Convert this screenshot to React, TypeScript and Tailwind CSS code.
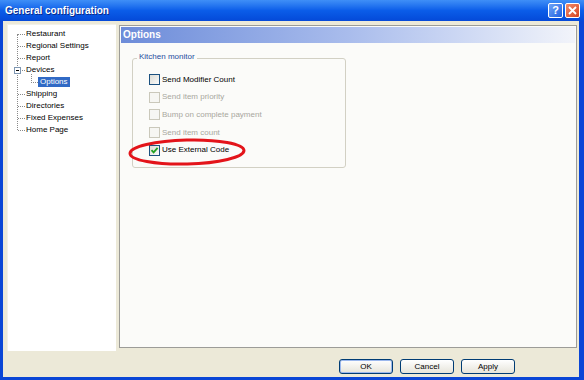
import React from "react";

const treeItems = [
    { label: "Restaurant", level: 0 },
    { label: "Regional Settings", level: 0 },
    { label: "Report", level: 0 },
    { label: "Devices", level: 0, expanded: true },
    { label: "Options", level: 1, selected: true },
    { label: "Shipping", level: 0 },
    { label: "Directories", level: 0 },
    { label: "Fixed Expenses", level: 0 },
    { label: "Home Page", level: 0 },
];

const options = [
    { label: "Send Modifier Count", enabled: true, checked: false },
    { label: "Send item priority", enabled: false, checked: false },
    { label: "Bump on complete payment", enabled: false, checked: false },
    { label: "Send item count", enabled: false, checked: false },
    { label: "Use External Code", enabled: true, checked: true },
];

function CheckBox({ enabled, checked }: { enabled: boolean; checked: boolean }) {
    return (
        <div
            className={
                enabled
                    ? "w-[11px] h-[11px] border border-[#1c5180] bg-gradient-to-br from-[#dcdcd6] to-[#fbfbfa] flex items-center justify-center"
                    : "w-[11px] h-[11px] border border-[#cac8bb] bg-[#f6f6f3]"
            }
        >
            {checked && (
                <svg width="9" height="9" viewBox="0 0 9 9">
                    <path d="M1.5 4.2 L3.6 6.4 L7.6 1.8" fill="none" stroke="#21a121" strokeWidth="1.8" />
                </svg>
            )}
        </div>
    );
}

function XpButton({ label, def }: { label: string; def?: boolean }) {
    return (
        <button
            className={
                "w-[54px] h-[15px] rounded-[3px] border border-[#003c74] bg-gradient-to-b from-white to-[#e6e4da] text-[8px] text-black leading-none flex items-center justify-center " +
                (def ? "shadow-[inset_0_0_0_1px_#9cb8ed]" : "")
            }
        >
            {label}
        </button>
    );
}

export default function App() {
    return (
        <div
            className="relative w-[584px] h-[380px] bg-[#0a46d6] flex flex-col overflow-hidden"
            style={{ fontFamily: '"Liberation Sans", Arial, sans-serif' }}
        >
            {/* Title bar */}
            <div className="h-[21px] flex items-center bg-gradient-to-b from-[#3f8ff7] via-[#0b5de9] to-[#0549d8] pl-[5px] pr-[4px]">
                <span className="text-white font-bold text-[10px] [text-shadow:1px_1px_0_#0a2a8a]">
                    General configuration
                </span>
                <div className="ml-auto flex gap-[2px]">
                    <div className="w-[15px] h-[15px] rounded-[2px] border border-white bg-gradient-to-br from-[#6fa3f7] to-[#1e5fe0] flex items-center justify-center text-white font-bold text-[11px] leading-none">
                        ?
                    </div>
                    <div className="w-[15px] h-[15px] rounded-[2px] border border-white bg-gradient-to-br from-[#f08a6a] to-[#d4421c] flex items-center justify-center">
                        <svg width="9" height="9" viewBox="0 0 9 9">
                            <path d="M1 1 L8 8 M8 1 L1 8" stroke="white" strokeWidth="1.8" />
                        </svg>
                    </div>
                </div>
            </div>

            {/* Client area */}
            <div className="flex-1 ml-[3px] mr-[5px] mb-[3px] bg-[#ece9d8] flex flex-col">
                <div className="flex pt-[3px]">
                    {/* Tree */}
                    <div className="ml-[4px] w-[109px] h-[327px] bg-white border-l border-t border-[#f2f1ea] relative text-[8px] text-black">
                        <div className="absolute left-[9px] top-[9px] w-0 h-[96px] border-l border-dotted border-[#8a8a8a]" />
                        <div className="absolute left-[23px] top-[49px] w-0 h-[9px] border-l border-dotted border-[#8a8a8a]" />
                        <div className="pt-[3px] flex flex-col">
                            {treeItems.map((it) => (
                                <div key={it.label} className="h-[12px] flex items-center relative">
                                    {it.level === 0 ? (
                                        <>
                                            <div className="w-[10px]" />
                                            <div className="w-[7px] border-t border-dotted border-[#8a8a8a]" />
                                            {it.expanded && (
                                                <div className="absolute left-[6px] top-[3px] w-[7px] h-[7px] border border-[#7f97b2] bg-white flex items-center justify-center">
                                                    <div className="w-[3px] h-px bg-black" />
                                                </div>
                                            )}
                                            <span className="ml-[1px] leading-none">{it.label}</span>
                                        </>
                                    ) : (
                                        <>
                                            <div className="w-[23px]" />
                                            <div className="w-[7px] border-t border-dotted border-[#8a8a8a]" />
                                            <span className="bg-[#316ac5] text-white px-[2px] h-[10px] flex items-center leading-none">
                                                {it.label}
                                            </span>
                                        </>
                                    )}
                                </div>
                            ))}
                        </div>
                    </div>

                    {/* Right panel */}
                    <div className="ml-[3px] mt-[1px] w-[458px] h-[323px] border border-[#9c9c98] bg-[#fbfbf9] flex flex-col">
                        <div className="h-[16px] m-[1px] bg-gradient-to-r from-[#6d8cd9] via-[#a9bcec] to-[#f2f4fa] flex items-center pl-[2px]">
                            <span className="text-white font-bold text-[10px] leading-none">Options</span>
                        </div>

                        <div className="ml-[12px] mt-[14px] w-[214px] h-[110px] border border-[#d2d0c4] rounded-[3px] relative">
                            <span className="absolute left-[4px] top-[-6px] bg-[#fbfbf9] px-[2px] text-[8px] text-[#1f4d9e] leading-none">
                                Kitchen monitor
                            </span>
                            <div className="pt-[12px] pl-[16px] flex flex-col">
                                {options.map((o) => (
                                    <div key={o.label} className="h-[17.6px] flex items-center gap-[2px]">
                                        <CheckBox enabled={o.enabled} checked={o.checked} />
                                        <span
                                            className={
                                                "text-[8px] leading-none " + (o.enabled ? "text-black" : "text-[#a8a79e]")
                                            }
                                        >
                                            {o.label}
                                        </span>
                                    </div>
                                ))}
                            </div>
                        </div>
                    </div>
                </div>

                {/* Buttons */}
                <div className="mt-[8px] flex gap-[7px] pl-[336px]">
                    <XpButton label="OK" def />
                    <XpButton label="Cancel" />
                    <XpButton label="Apply" />
                </div>
            </div>

            {/* Red annotation ellipse */}
            <svg className="absolute left-[126px] top-[136px]" width="124" height="32" viewBox="0 0 124 32">
                <ellipse cx="61" cy="16" rx="57" ry="12" fill="none" stroke="#e3141a" strokeWidth="3" transform="rotate(-1.5 61 16)" />
            </svg>
        </div>
    );
}
